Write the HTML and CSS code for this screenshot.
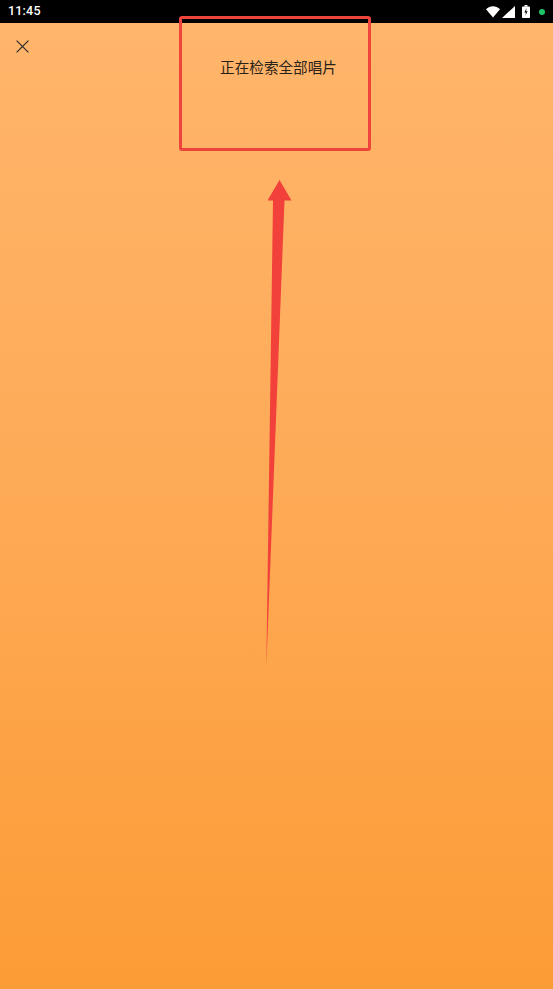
FILE: index.html
```html
<!DOCTYPE html>
<html lang="zh">
<head>
<meta charset="utf-8">
<title>正在检索全部唱片</title>
<link rel="stylesheet" href="styles.css">
</head>
<body>
<div class="phone">
  <div class="status-bar">
    <span class="time">11:45</span>
    <div class="status-icons">
      <svg class="ic-wifi" width="14" height="12" viewBox="0 0 14 12"><path d="M0 3.2 C4 -0.9 10 -0.9 14 3.2 L7 11.5 Z" fill="#fff"/></svg>
      <svg class="ic-signal" width="13" height="12" viewBox="0 0 13 12"><path d="M13 0 L13 12 L0 12 Z" fill="#fff"/></svg>
      <svg class="ic-battery" width="8" height="13" viewBox="0 0 8 13"><rect x="2.5" y="0" width="3" height="1.6" fill="#fff"/><rect x="0" y="1.4" width="8" height="11.6" rx="0.8" fill="#fff"/><path d="M4.6 3 L2.4 7.4 L3.9 7.4 L3.4 10.6 L5.6 6.2 L4.1 6.2 Z" fill="#000"/></svg>
      <span class="dot"></span>
    </div>
  </div>
  <main class="screen">
    <div class="close-btn" aria-label="关闭">
      <svg width="13" height="13" viewBox="0 0 13 13"><path d="M0.6 0.6 L12.4 12.4 M12.4 0.6 L0.6 12.4" stroke="#2b2b2b" stroke-width="1.2" fill="none"/></svg>
    </div>
    <h1 class="title">正在检索全部唱片</h1>
  </main>

  <div class="annotation-box"></div>
  <svg class="annotation-arrow" width="553" height="989" viewBox="0 0 553 989">
    <path d="M279.5 180 L291.5 200.5 L284.5 200.5 L266.3 668 L273 200.5 L267.5 200.5 Z" fill="#f2403a"/>
  </svg>
</div>
</body>
</html>
```
FILE: styles.css
```css
* { box-sizing: border-box; }
html, body { margin: 0; padding: 0; }
body {
  width: 553px;
  height: 989px;
  overflow: hidden;
  font-family: "Noto Sans CJK SC", Roboto, "Noto Sans", sans-serif;
}
.phone {
  position: relative;
  width: 553px;
  height: 989px;
  display: flex;
  flex-direction: column;
}
.status-bar {
  height: 23px;
  background: #000;
  display: flex;
  align-items: center;
  justify-content: space-between;
  padding: 0 8px 0 8px;
  flex: none;
}
.time {
  color: #fff;
  font-family: Roboto, "Liberation Sans", sans-serif;
  font-weight: 500;
  font-size: 12.5px;
  letter-spacing: 0.2px;
  line-height: 1;
}
.status-icons {
  display: flex;
  align-items: center;
}
.ic-wifi { margin-right: 2px; }
.ic-signal { margin-right: 7px; }
.ic-battery { margin-right: 9px; }
.dot {
  width: 6px;
  height: 6px;
  border-radius: 50%;
  background: #1fc46a;
  margin-right: 0;
}
.screen {
  flex: 1;
  background: linear-gradient(180deg, #ffb56b 0%, #feab58 45%, #fc9c36 100%);
  display: flex;
  flex-direction: column;
}
.close-btn {
  margin: 17px 0 0 16px;
  width: 13px;
  height: 13px;
  display: flex;
}
.title {
  margin: 4px 0 0 0;
  padding-left: 4px;
  font-size: 14.6px;
  font-weight: 400;
  line-height: 20px;
  color: #2a2218;
  text-align: center;
}
.annotation-box {
  position: absolute;
  left: 179px;
  top: 16px;
  width: 192px;
  height: 135px;
  border: 3px solid #ef443b;
  border-radius: 3px;
}
.annotation-arrow {
  position: absolute;
  left: 0;
  top: 0;
  pointer-events: none;
}
```
